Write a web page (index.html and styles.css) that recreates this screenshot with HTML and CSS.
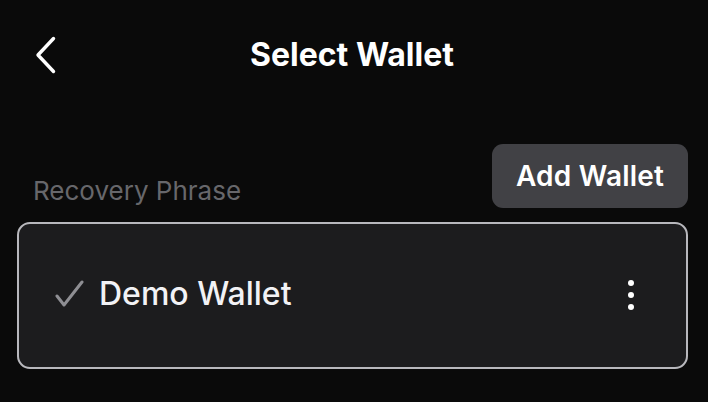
FILE: index.html
```html
<!DOCTYPE html>
<html lang="en">
<head>
<meta charset="utf-8">
<title>Select Wallet</title>
<link rel="stylesheet" href="styles.css">
</head>
<body>
<div class="screen">
  <header class="topbar">
    <button class="back" aria-label="Back">
      <svg width="24" height="40" viewBox="0 0 24 40"><path d="M19.5 3.5 L4 20 L19.5 36.5" fill="none" stroke="#fff" stroke-width="3.4" stroke-linecap="round" stroke-linejoin="round"/></svg>
    </button>
    <h1 class="title">Select Wallet</h1>
  </header>
  <section class="section">
    <div class="section-head">
      <span class="label">Recovery Phrase</span>
      <button class="add">Add Wallet</button>
    </div>
    <div class="card">
      <div class="wallet">
        <svg class="check" width="30" height="30" viewBox="0 0 30 30"><path d="M2 16 L9 25 L27 2" fill="none" stroke="#8e8e93" stroke-width="3" stroke-linecap="round" stroke-linejoin="round"/></svg>
        <span class="name">Demo Wallet</span>
      </div>
      <div class="more"><span></span><span></span><span></span></div>
    </div>
  </section>
</div>
</body>
</html>
```
FILE: styles.css
```css
* { box-sizing: border-box; }
html, body { margin: 0; padding: 0; }
body {
  background: #0a0a0a;
  font-family: Inter, "Noto Sans", sans-serif;
  color: #fff;
  width: 708px;
  height: 402px;
  overflow: hidden;
}
.screen { padding: 0 21px 0 17px; }
.topbar {
  position: relative;
  height: 112px;
  display: flex;
  align-items: center;
  justify-content: center;
  padding-bottom: 2px;
}
.back {
  position: absolute;
  left: 17px;
  top: 35px;
  background: none;
  border: 0;
  padding: 0;
  width: 24px;
  height: 40px;
}
.back svg { display: block; }
.title {
  margin: 0;
  margin-top: -2px;
  font-size: 32px;
  font-weight: 700;
  letter-spacing: 0;
  color: #fff;
}
.section-head {
  display: flex;
  justify-content: space-between;
  align-items: flex-end;
  margin-top: 32px;
  margin-bottom: 14px;
}
.label {
  font-size: 26px;
  color: #67676b;
  padding-left: 16px;
  padding-bottom: 2px;
}
.add {
  background: #414145;
  color: #fff;
  border: 0;
  border-radius: 11px;
  height: 64px;
  width: 196px;
  font-family: inherit;
  font-size: 28px;
  font-weight: 600;
  letter-spacing: 0.2px;
  padding: 0;
  margin-right: -1px;
}
.card {
  height: 147px;
  background: #1c1c1e;
  border: 2px solid #b8b8bd;
  border-radius: 13px;
  display: flex;
  align-items: center;
  justify-content: space-between;
  padding: 0 52px 4px 36px;
  margin-right: -1px;
}
.wallet { display: flex; align-items: center; gap: 14px; }
.check { display: block; margin-top: 2px; }
.name {
  font-size: 32px;
  font-weight: 500;
  color: #f2f2f5;
}
.more { display: flex; flex-direction: column; gap: 6px; margin-top: 2px; }
.more span {
  width: 6px;
  height: 6px;
  border-radius: 50%;
  background: #fff;
}
```
